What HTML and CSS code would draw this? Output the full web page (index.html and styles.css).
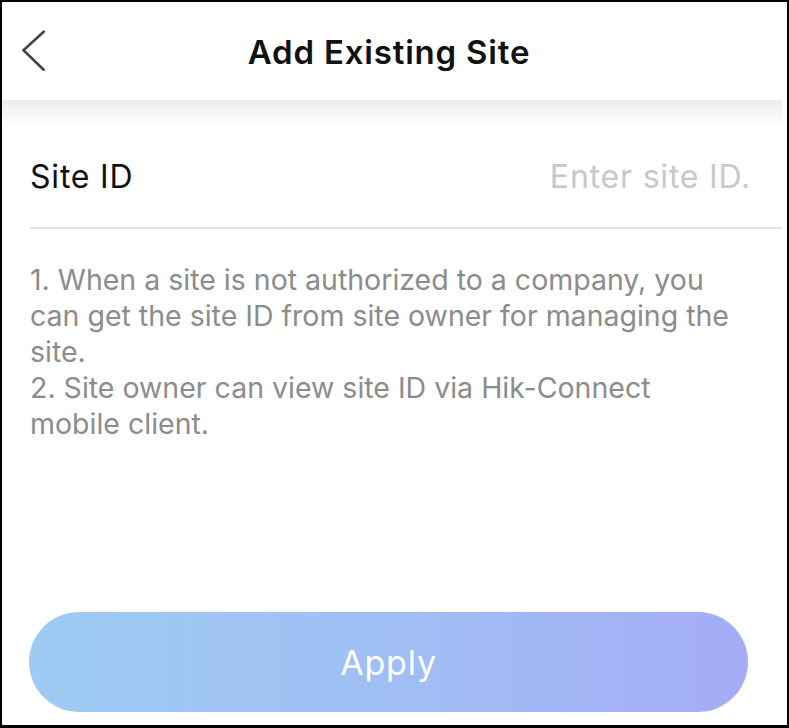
FILE: index.html
```html
<!DOCTYPE html>
<html>
<head>
<meta charset="utf-8">
<link rel="stylesheet" href="styles.css">
</head>
<body>
<div class="frame">
  <header class="header">
    <svg class="back" width="30" height="46" viewBox="0 0 30 46">
      <polyline points="21.7,1.7 1.5,20.3 21.7,39.7" fill="none" stroke="#444" stroke-width="2.6" stroke-linecap="round" stroke-linejoin="round"/>
    </svg>
    <h1 class="title">Add Existing Site</h1>
  </header>
  <div class="shadow"></div>
  <main class="content">
    <div class="field">
      <span class="label">Site ID</span>
      <span class="placeholder">Enter site ID.</span>
    </div>
    <p class="hint">1. When a site is not authorized to a company, you can get the site ID from site owner for managing the site.<br>2. Site owner can view site ID via Hik-Connect mobile client.</p>
    <div class="spacer"></div>
    <button class="apply">Apply</button>
  </main>
</div>
</body>
</html>
```

FILE: styles.css
```css
html, body {
  margin: 0;
  padding: 0;
  background: #000;
}
.frame {
  width: 789px;
  height: 728px;
  box-sizing: border-box;
  border: 2px solid #000;
  border-bottom-width: 3px;
  background: #fff;
  display: flex;
  flex-direction: column;
  font-family: Inter, "Liberation Sans", Arial, sans-serif;
  overflow: hidden;
}
.header {
  position: relative;
  height: 98px;
  padding-right: 11px;
  display: flex;
  align-items: center;
  justify-content: center;
  flex-shrink: 0;
  background: #fff;
}
.back {
  position: absolute;
  left: 20px;
  top: 28px;
}
.title {
  margin: 0;
  font-size: 33px;
  font-weight: 600;
  color: #111;
  letter-spacing: 0.8px;
  transform: translateY(1px);
}
.shadow {
  height: 26px;
  margin-right: 5px;
  flex-shrink: 0;
  background: linear-gradient(to bottom, #ededed, #fafafa 70%, #fff);
}
.content {
  flex: 1;
  display: flex;
  flex-direction: column;
}
.field {
  height: 103px;
  margin-left: 28px;
  margin-right: 5px;
  border-bottom: 2px solid #e3e3e3;
  display: flex;
  align-items: center;
  justify-content: space-between;
  box-sizing: border-box;
}
.label {
  font-size: 32px;
  color: #111;
  letter-spacing: 0.8px;
}
.placeholder {
  font-size: 32px;
  color: #c7c7cc;
  padding-right: 31px;
  letter-spacing: 0.8px;
}
.hint {
  margin: 33px 50px 0 28px;
  font-size: 28.5px;
  line-height: 36px;
  color: #8c8c8c;
  letter-spacing: 0;
}
.spacer {
  flex: 1;
}
.apply {
  margin: 0 39px 13px 27px;
  height: 100px;
  border: none;
  border-radius: 50px;
  background: linear-gradient(to right, #9ecbf3, #a0bff4 50%, #a4acf6);
  color: #fff;
  font-family: Inter, "Liberation Sans", Arial, sans-serif;
  font-size: 34px;
  letter-spacing: 0.8px;
  padding: 0;
}
```
